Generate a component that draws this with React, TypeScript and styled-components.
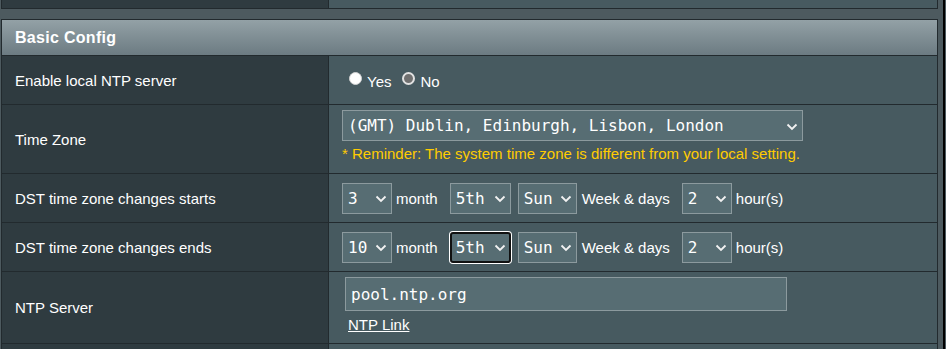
import styled, { createGlobalStyle } from "styled-components";

const GlobalStyle = createGlobalStyle`
  html, body {
    margin: 0;
    padding: 0;
    overflow: hidden;
    background: #4d5a5f;
  }
  body {
    font-family: "Liberation Sans", Arial, sans-serif;
    color: #fff;
  }
`;

const Frame = styled.div`
  box-sizing: border-box;
  width: 945px;
  height: 349px;
  padding-left: 1px;
  border-right: 2px solid #000;
  overflow: hidden;
`;

const FormTable = styled.div<{ $cut?: boolean }>`
  box-sizing: border-box;
  width: 937px;
  border: 1px solid #222a2e;
  border-top: ${props => (props.$cut ? "none" : "1px solid #222a2e")};
  margin-bottom: 10px;
`;

const Header = styled.div`
  height: 35px;
  display: flex;
  align-items: center;
  padding-left: 13px;
  background: linear-gradient(to bottom, #93a1a6 0%, #6c7b82 100%);
  border-bottom: 1px solid #222a2e;
  font-size: 16px;
  font-weight: bold;
  letter-spacing: 0.3px;
`;

const Row = styled.div<{ $h: number }>`
  display: grid;
  grid-template-columns: 327px 1fr;
  height: ${props => props.$h}px;

  & + & {
    border-top: 1px solid #222a2e;
  }
`;

const Label = styled.div`
  display: flex;
  align-items: center;
  padding-left: 13px;
  background: #2f3b40;
  border-right: 1px solid #222a2e;
  font-size: 15px;
`;

const Value = styled.div<{ $stack?: boolean; $top?: number }>`
  display: flex;
  flex-direction: ${props => (props.$stack ? "column" : "row")};
  align-items: ${props => (props.$stack ? "flex-start" : "center")};
  padding: ${props => props.$top ?? 0}px 0 0 13px;
  background: #475a60;
  font-size: 15px;
`;

const RadioOption = styled.label<{ $ml: number }>`
  display: inline-flex;
  align-items: center;
  margin-left: ${props => props.$ml}px;
`;

const RadioDot = styled.span<{ $checked?: boolean }>`
  box-sizing: border-box;
  width: 13px;
  height: 13px;
  margin: 0 5px 6px 0;
  border-radius: 50%;
  background: ${props => (props.$checked ? "#707070" : "#fff")};
  border: ${props => (props.$checked ? "2px solid #e2e2e2" : "1px solid #d4d4d4")};
`;

const SelectBox = styled.div<{ $w: number; $ml?: number; $focused?: boolean }>`
  box-sizing: border-box;
  flex: none;
  width: ${props => props.$w}px;
  height: 31px;
  margin-left: ${props => props.$ml ?? 0}px;
  display: flex;
  align-items: center;
  justify-content: space-between;
  padding: 0 ${props => (props.$focused ? 3 : 4)}px 0 ${props => (props.$focused ? 4 : 5)}px;
  background: #576d73;
  border: ${props => (props.$focused ? "2px solid #111" : "1px solid #8c9a9e")};
  border-radius: ${props => (props.$focused ? "3px" : "0")};
  box-shadow: ${props => (props.$focused ? "0 0 0 1px #fff" : "none")};
  color: #fff;
  font: 16px "DejaVu Sans Mono", "Liberation Mono", monospace;
  white-space: pre;
`;

const Chevron = styled.svg`
  flex: none;
  margin-top: 2px;
`;

const Word = styled.span<{ $ml: number }>`
  margin-left: ${props => props.$ml}px;
  white-space: nowrap;
`;

const Reminder = styled.div`
  margin-top: 4px;
  color: #ffcc00;
  font-size: 15px;
`;

const TextInput = styled.div`
  box-sizing: border-box;
  width: 442px;
  height: 34px;
  margin-left: 3px;
  display: flex;
  align-items: center;
  padding-left: 5px;
  background: #576d73;
  border: 1px solid #8c9a9e;
  font: 16px "DejaVu Sans Mono", "Liberation Mono", monospace;
`;

const Link = styled.a`
  margin: 5px 0 0 6px;
  color: #fff;
  font-size: 15px;
  text-decoration: underline;
`;

function Select({ value, width, ml, focused }: { value: string; width: number; ml?: number; focused?: boolean }) {
  return (
    <SelectBox $w={width} $ml={ml} $focused={focused}>
      <span>{value}</span>
      <Chevron width="12" height="8" viewBox="0 0 12 8">
        <path d="M1.5 1.5 L6 6 L10.5 1.5" fill="none" stroke="#f2f2f2" strokeWidth="1.8" />
      </Chevron>
    </SelectBox>
  );
}

function DstRow({ label, month, focusWeek }: { label: string; month: string; focusWeek?: boolean }) {
  return (
    <Row $h={48}>
      <Label>{label}</Label>
      <Value>
        <Select value={month} width={50} />
        <Word $ml={4}>month</Word>
        <Select value="5th" width={61} ml={12} focused={focusWeek} />
        <Select value="Sun" width={59} ml={7} />
        <Word $ml={5}>Week &amp; days</Word>
        <Select value="2" width={50} ml={12} />
        <Word $ml={4}>hour(s)</Word>
      </Value>
    </Row>
  );
}

export default function App() {
  return (
    <>
      <GlobalStyle />
      <Frame>
        <FormTable $cut>
          <Row $h={8}>
            <Label />
            <Value />
          </Row>
        </FormTable>
        <FormTable>
          <Header>Basic Config</Header>
          <Row $h={48}>
            <Label>Enable local NTP server</Label>
            <Value $top={2}>
              <RadioOption $ml={7}>
                <RadioDot />
                Yes
              </RadioOption>
              <RadioOption $ml={11}>
                <RadioDot $checked />
                No
              </RadioOption>
            </Value>
          </Row>
          <Row $h={68}>
            <Label>Time Zone</Label>
            <Value $stack $top={5}>
              <Select value="(GMT) Dublin, Edinburgh, Lisbon, London" width={461} />
              <Reminder>* Reminder: The system time zone is different from your local setting.</Reminder>
            </Value>
          </Row>
          <DstRow label="DST time zone changes starts" month="3" />
          <DstRow label="DST time zone changes ends" month="10" focusWeek />
          <Row $h={71}>
            <Label>NTP Server</Label>
            <Value $stack $top={5}>
              <TextInput>pool.ntp.org</TextInput>
              <Link href="#">NTP Link</Link>
            </Value>
          </Row>
          <Row $h={48}>
            <Label />
            <Value />
          </Row>
        </FormTable>
      </Frame>
    </>
  );
}
